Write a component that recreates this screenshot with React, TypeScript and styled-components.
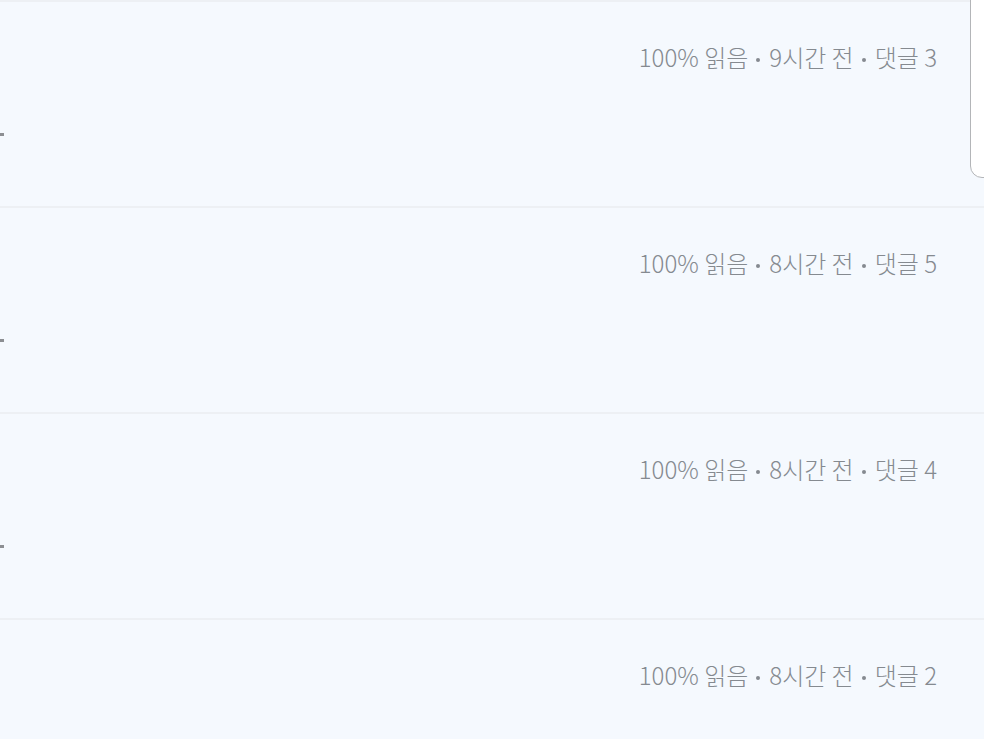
import React from 'react'
import styled, {createGlobalStyle} from 'styled-components'

const GlobalStyle = createGlobalStyle`
  html, body {
    margin: 0;
    padding: 0;
    background: #f5f9fe;
    overflow: hidden;
  }
  body {
    font-family: "Noto Sans CJK KR", "Noto Sans", sans-serif;
  }
`;

const Page = styled.div`
  position: relative;
  width: 984px;
  height: 739px;
  overflow: hidden;
  background: #f5f9fe;
`;

const List = styled.ul`
  list-style: none;
  margin: 0;
  padding: 0;
`;

const Row = styled.li`
  height: 204px;
  border-top: 2px solid #edf0f4;
  display: grid;
  grid-template-rows: 131px auto;
`;

const Meta = styled.div`
  justify-self: end;
  padding: 38px 47px 0 0;
  font-size: 24px;
  font-weight: 300;
  line-height: 34px;
  color: #858a90;
  white-space: nowrap;
`;

const Dot = styled.span`
  display: inline-block;
  width: 4px;
  height: 4px;
  margin: 0 9px 0 8px;
  border-radius: 50%;
  background: #858a90;
  vertical-align: middle;
`;

const Dash = styled.span`
  display: block;
  width: 4px;
  height: 3px;
  background: #8c8f93;
`;

const Popover = styled.div`
  position: absolute;
  left: 970px;
  top: -20px;
  width: 60px;
  height: 196px;
  background: #ffffff;
  border: 1.5px solid #b3b5b8;
  border-radius: 12px;
`;

type Post = {read: number; hours: number; comments: number};

const posts: Post[] = [
  {read: 100, hours: 9, comments: 3},
  {read: 100, hours: 8, comments: 5},
  {read: 100, hours: 8, comments: 4},
  {read: 100, hours: 8, comments: 2},
];

export default function App() {
  return (
    <Page>
      <GlobalStyle/>
      <List>
        {posts.map((p, i) => (
          <Row key={i}>
            <Meta>
              {p.read}% 읽음<Dot/>{p.hours}시간 전<Dot/>댓글 {p.comments}
            </Meta>
            <Dash/>
          </Row>
        ))}
      </List>
      <Popover/>
    </Page>
  );
}
